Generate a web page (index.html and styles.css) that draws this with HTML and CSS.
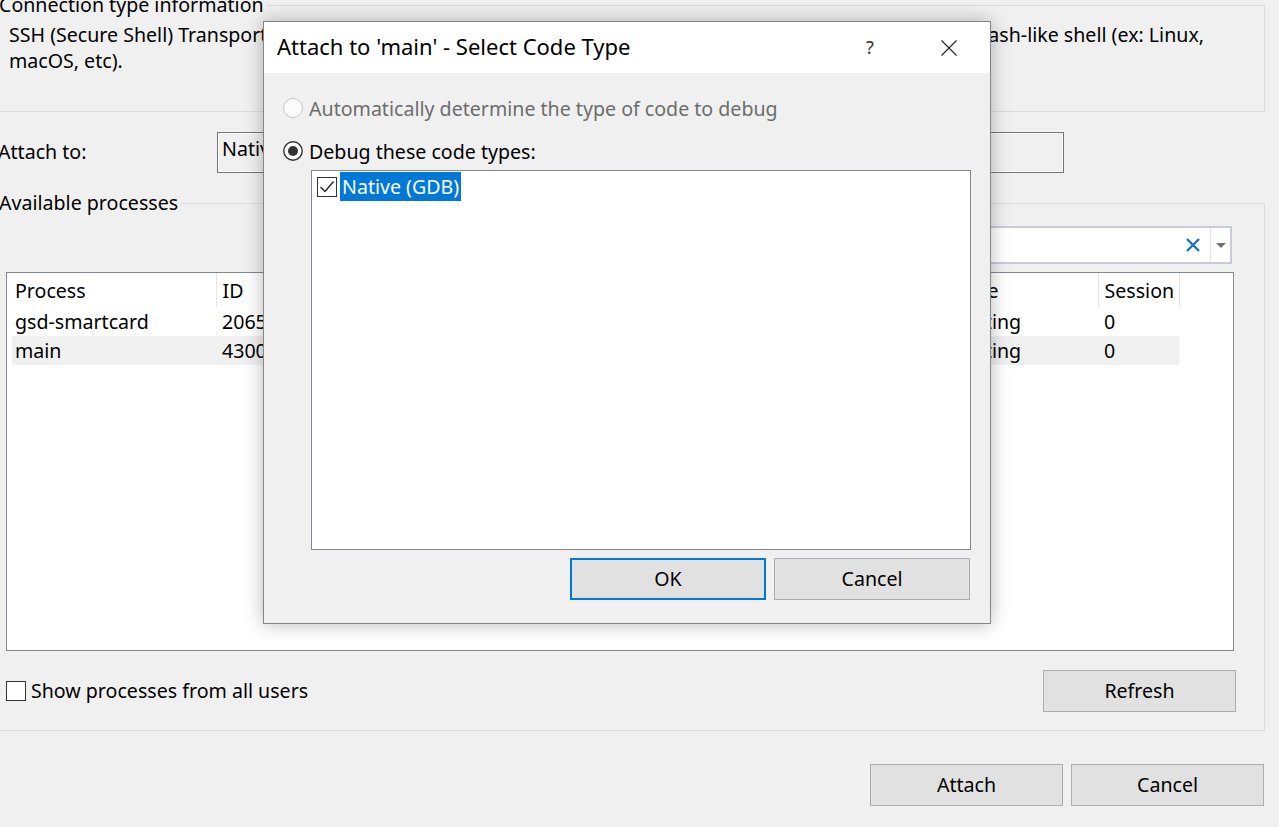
FILE: index.html
```html
<!DOCTYPE html>
<html>
<head>
<meta charset="utf-8">
<title>Attach to Process</title>
<link rel="stylesheet" href="styles.css">
</head>
<body>
<div class="window">
  <fieldset class="group conn">
    <legend>Connection type information</legend>
    <div class="desc">
      <div class="line1"><span>SSH (Secure Shell) Transport:</span><span class="tail">bash-like shell (ex: Linux,</span></div>
      <div>macOS, etc).</div>
    </div>
  </fieldset>

  <div class="attach-row">
    <span class="lbl">Attach to:</span>
    <div class="field">Native</div>
  </div>

  <fieldset class="group procs">
    <legend>Available processes</legend>
    <div class="procs-body">
      <div class="search">
        <div class="search-input">
          <svg class="clear" width="16" height="16" viewBox="0 0 16 16"><path d="M2 2 L14 14 M14 2 L2 14" stroke="#1a72c7" stroke-width="2.4" fill="none"/></svg>
        </div>
        <div class="search-drop">
          <svg width="12" height="8" viewBox="0 0 12 8"><path d="M1 2 L11 2 L6 7 Z" fill="#707070"/></svg>
        </div>
      </div>
      <div class="list">
        <table class="ptable">
          <colgroup><col class="c1"><col class="c2"><col class="c3"><col class="c4"><col class="c5"></colgroup>
          <thead>
            <tr><th class="first">Process</th><th>ID</th><th>Title</th><th>State</th><th>Session</th></tr>
          </thead>
          <tbody>
            <tr><td class="first">gsd-smartcard</td><td>2065</td><td></td><td>Waiting</td><td>0</td></tr>
            <tr class="alt"><td class="first">main</td><td>4300</td><td></td><td>Waiting</td><td>0</td></tr>
          </tbody>
        </table>
      </div>
      <div class="list-foot">
        <label class="check-row"><span class="cbox"></span><span>Show processes from all users</span></label>
        <button class="btn refresh">Refresh</button>
      </div>
    </div>
  </fieldset>

  <div class="actions">
    <button class="btn">Attach</button>
    <button class="btn">Cancel</button>
  </div>
</div>

<div class="dialog">
  <div class="dlg-title">
    <span class="dlg-caption">Attach to 'main' - Select Code Type</span>
    <span class="dlg-help">?</span>
    <span class="dlg-close">
      <svg width="16" height="16" viewBox="0 0 16 16"><path d="M0.5 0.5 L15.5 15.5 M15.5 0.5 L0.5 15.5" stroke="#1f1f1f" stroke-width="1.1" fill="none"/></svg>
    </span>
  </div>
  <div class="dlg-body">
    <div class="radio-row disabled">
      <svg class="radio" width="20" height="20" viewBox="0 0 20 20"><circle cx="10" cy="10" r="9.5" fill="#fbfbfb" stroke="#c6c6c6" stroke-width="1"/></svg>
      <span>Automatically determine the type of code to debug</span>
    </div>
    <div class="radio-row second">
      <svg class="radio" width="20" height="20" viewBox="0 0 20 20"><circle cx="10" cy="10" r="9.2" fill="#ffffff" stroke="#333333" stroke-width="1.4"/><circle cx="10" cy="10" r="5" fill="#333333"/></svg>
      <span>Debug these code types:</span>
    </div>
    <div class="types">
      <div class="type-item">
        <svg class="tcheck" width="20" height="20" viewBox="0 0 20 20"><rect x="0.5" y="0.5" width="19" height="19" fill="#ffffff" stroke="#333333"/><path d="M3.5 10 L8 14.5 L16.5 4.5" stroke="#222222" stroke-width="1.4" fill="none"/></svg>
        <span class="sel">Native (GDB)</span>
      </div>
    </div>
    <div class="dlg-buttons">
      <button class="btn default">OK</button>
      <button class="btn">Cancel</button>
    </div>
  </div>
</div>
</body>
</html>
```
FILE: styles.css
```css
* { box-sizing: border-box; }
html, body { margin: 0; padding: 0; }
body {
  width: 1279px;
  height: 827px;
  overflow: hidden;
  position: relative;
  background: #f0f0f0;
  font-family: "Noto Sans", "Open Sans", sans-serif;
  font-size: 19.6px;
  color: #000;
}

.window { display: flex; flex-direction: column; }

.group {
  border: 1px solid #dcdcdc;
  margin: 0 14px 0 -20px;
  padding: 0 0 0 19px;
  min-width: 0;
}
.group legend { padding: 0 2px 0 0; line-height: 26px; margin-left: -1px; }

.conn { margin-top: -8px; padding-bottom: 37px; }
.desc { margin: 4px 0 0 9px; line-height: 26px; }
.line1 { display: flex; justify-content: space-between; width: 1195px; white-space: nowrap; }
.line1 .tail { flex-shrink: 0; }

.attach-row { display: flex; align-items: center; margin-top: 20px; height: 40px; }
.lbl { width: 219px; margin-left: -2px; padding-bottom: 1px; }
.field {
  width: 847px;
  height: 41px;
  border: 1px solid #767676;
  box-shadow: inset 0 0 0 1px #fcfcfc;
  padding: 3px 4px 0;
  line-height: 26px;
  white-space: nowrap;
  overflow: hidden;
}

.procs { margin-top: 18px; padding-right: 0; padding-bottom: 18px; }
.procs-body { display: flex; flex-direction: column; }

.search {
  display: flex;
  align-self: flex-end;
  width: 560px;
  height: 38px;
  margin: 10px 32px 0 0;
  border: 2px solid #c9cbd8;
  background: #fff;
}
.search-input { flex: 1; display: flex; align-items: center; justify-content: flex-end; padding-right: 9px; }
.search-drop {
  width: 20px;
  display: flex; align-items: center; justify-content: center;
  border-left: 1px solid #e3e5eb;
  background: #fff;
}

.list {
  margin: 8px 30px 0 6px;
  height: 379px;
  border: 1px solid #828790;
  background: #fff;
  padding: 0 0 0 5px;
  overflow: hidden;
}
.ptable { border-collapse: collapse; table-layout: fixed; width: 1167px; }
.c1 { width: 204px; } .c2 { width: 200px; } .c3 { width: 529px; } .c4 { width: 153px; } .c5 { width: 81px; }
.ptable th, .ptable td {
  text-align: left; font-weight: normal; padding: 0 0 0 6px;
  white-space: nowrap; overflow: hidden;
}
.ptable th { height: 34px; border-right: 1px solid #e5e5e5; padding-top: 1px; }
.ptable td { height: 29px; }
.ptable .first { padding-left: 3px; }
.ptable tr.alt td { background: #f0f0f0; }

.list-foot { display: flex; align-items: center; justify-content: space-between; margin-top: 19px; }
.check-row { display: flex; align-items: center; margin-left: 6px; }
.cbox { width: 20px; height: 20px; border: 1px solid #333; background: #fff; margin-right: 5px; }
.check-row span:last-child { padding-bottom: 1px; }

.btn {
  font: inherit;
  color: #000;
  width: 193px;
  height: 42px;
  background: #e1e1e1;
  border: 1px solid #adadad;
  padding: 0 0 2px;
}
.refresh { margin-right: 28px; }

.actions { display: flex; justify-content: flex-end; gap: 8px; margin: 33px 15px 0 0; }

.dialog {
  position: absolute;
  left: 263px;
  top: 21px;
  width: 728px;
  height: 603px;
  background: #f0f0f0;
  border: 1px solid #858585;
  box-shadow: 0 0 18px rgba(0, 0, 0, 0.28);
  display: flex;
  flex-direction: column;
}
.dlg-title {
  height: 51px;
  background: #fff;
  display: flex;
  align-items: center;
  padding-left: 13px;
}
.dlg-caption { flex: 1; font-size: 22px; padding-bottom: 4px; }
.dlg-help { width: 20px; text-align: center; color: #333; font-size: 18px; margin-right: 61px; padding-bottom: 2px; }
.dlg-close { display: flex; width: 16px; margin-right: 33px; }

.dlg-body { flex: 1; display: flex; flex-direction: column; padding: 22px 19px 23px 19px; }
.radio-row { display: flex; align-items: center; height: 26px; }
.radio-row .radio { margin-right: 6px; flex-shrink: 0; }
.radio-row.disabled { color: #6d6d6d; }
.radio-row.second { margin-top: 17px; }

.types {
  margin: 6px 0 0 28px;
  height: 380px;
  border: 1px solid #828790;
  background: #fff;
  padding: 1px 0 0 5px;
}
.type-item { display: flex; align-items: center; height: 29px; }
.tcheck { margin-right: 3px; }
.sel { background: #0078d7; color: #fff; line-height: 29px; padding: 0 2px; }

.dlg-buttons { display: flex; justify-content: flex-end; gap: 8px; margin-top: 8px; padding-right: 1px; }
.dlg-buttons .btn { width: 196px; }
.btn.default { border: 2px solid #0078d7; }
```
